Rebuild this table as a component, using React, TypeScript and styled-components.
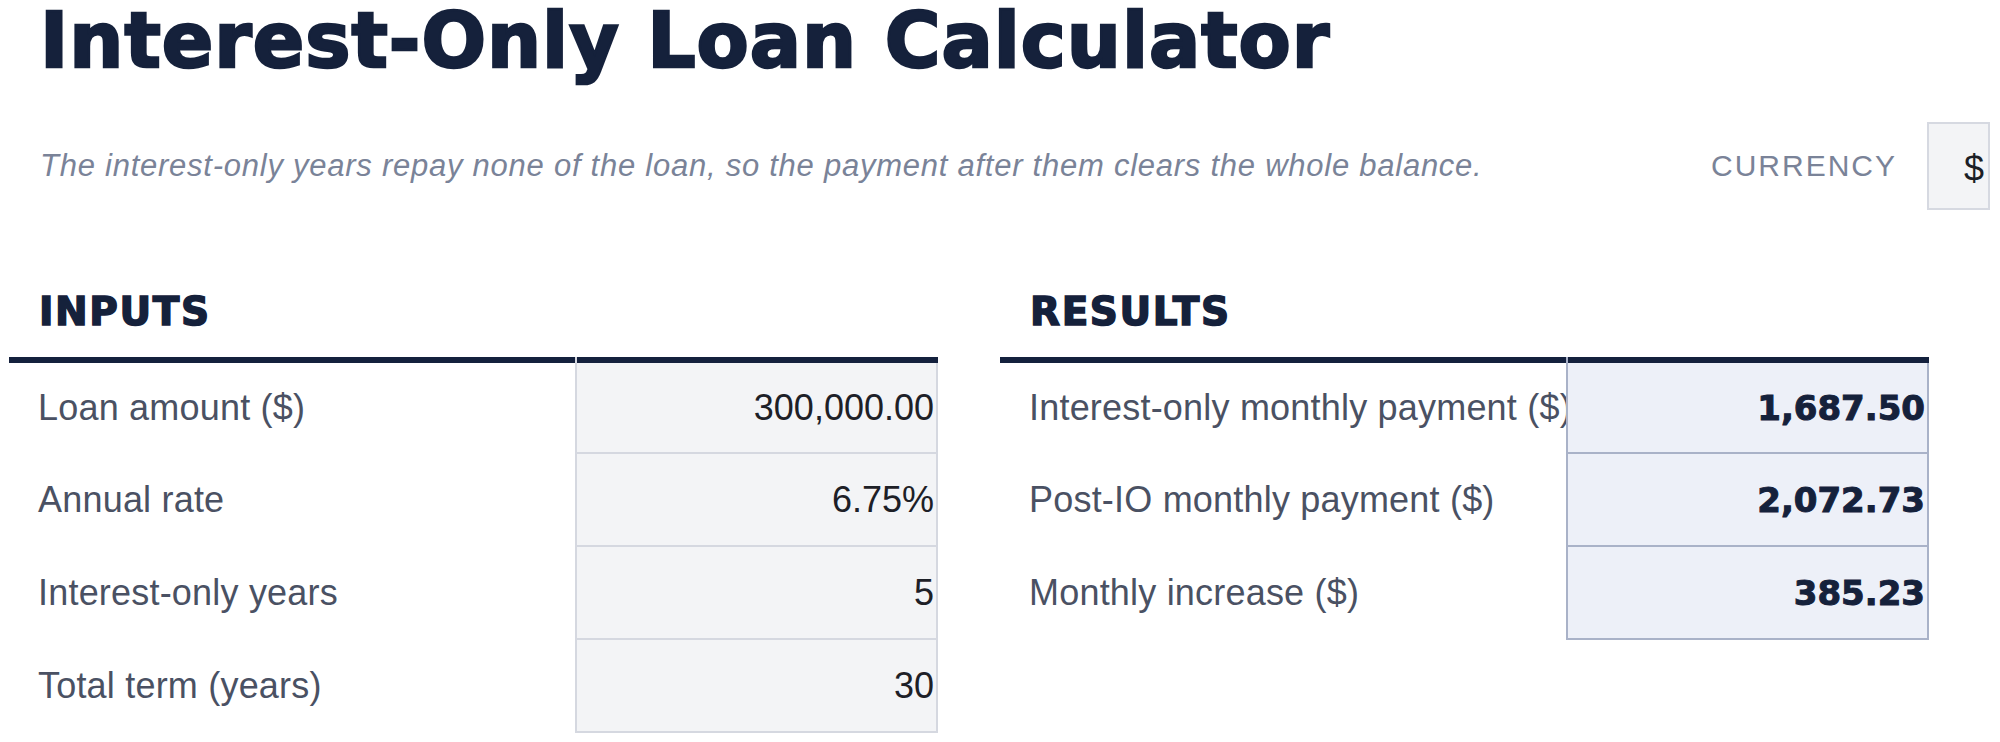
import React from 'react';
import styled, { createGlobalStyle } from 'styled-components';

const GlobalStyle = createGlobalStyle`
  html, body { margin: 0; padding: 0; background: #ffffff; }
  body { font-family: "Liberation Sans", Arial, sans-serif; }
  *, *::before, *::after { box-sizing: border-box; }
`;

const navy = '#15213b';

const Page = styled.div`
  width: 2000px;
  padding: 3px 10px 0 9px;
`;

const Title = styled.h1`
  margin: 0;
  padding-left: 31px;
  font-family: "DejaVu Sans", sans-serif;
  font-weight: 700;
  font-size: 76px;
  line-height: 76px;
  letter-spacing: 1px;
  -webkit-text-stroke: 2.5px ${navy};
  color: ${navy};
  white-space: nowrap;
`;

const SubRow = styled.div`
  display: flex;
  align-items: center;
  justify-content: space-between;
  margin-top: 43px;
  padding-left: 31px;
`;

const Subtitle = styled.p`
  margin: 0;
  font-style: italic;
  font-size: 31px;
  line-height: 34px;
  letter-spacing: 0.75px;
  color: #7a8398;
  white-space: nowrap;
`;

const CurrencyGroup = styled.div`
  display: flex;
  align-items: center;
  gap: 30px;
`;

const CurrencyLabel = styled.span`
  font-size: 30px;
  letter-spacing: 2px;
  text-transform: uppercase;
  color: #7a8398;
`;

const CurrencyBox = styled.div`
  width: 63px;
  height: 88px;
  border: 2px solid #d6d9e1;
  background: #f3f4f6;
  display: flex;
  align-items: center;
  justify-content: flex-end;
  padding: 6px 4px 0 0;
  font-size: 36px;
  color: #1c1f26;
`;

const Sections = styled.div`
  display: flex;
  gap: 62px;
  margin-top: 79px;
`;

const Section = styled.section`
  width: 929px;
  flex: none;
`;

const SectionTitle = styled.h2`
  margin: 0 0 22px;
  padding-left: 30px;
  font-family: "DejaVu Sans", sans-serif;
  font-weight: 700;
  font-size: 39px;
  line-height: 46px;
  letter-spacing: 1.6px;
  -webkit-text-stroke: 1.5px ${navy};
  color: ${navy};
`;

const Grid = styled.div`
  display: grid;
  grid-template-columns: 566px 363px;
  grid-template-rows: 91px;
  grid-auto-rows: 93px;
  border-top: 6px solid #14213d;
`;

const LabelCell = styled.div`
  display: flex;
  align-items: center;
  padding-left: 29px;
  border-bottom: 2px solid transparent;
  overflow: hidden;
  white-space: nowrap;
  font-size: 36px;
  letter-spacing: 0.2px;
  color: #4a5163;
`;

type Tone = 'input' | 'result';

const ValueCell = styled.div<{ $tone: Tone; $first: boolean }>`
  position: relative;
  display: flex;
  align-items: center;
  justify-content: flex-end;
  padding-right: 2px;
  white-space: nowrap;
  border: 2px solid ${(p) => (p.$tone === 'result' ? '#a9b2c8' : '#d5d8e0')};
  border-top: none;
  background: ${(p) => (p.$tone === 'result' ? '#edf0f8' : '#f3f4f6')};
  font-family: ${(p) => (p.$tone === 'result' ? '"DejaVu Sans", sans-serif' : '"Liberation Sans", Arial, sans-serif')};
  font-weight: ${(p) => (p.$tone === 'result' ? 700 : 400)};
  font-size: ${(p) => (p.$tone === 'result' ? '34px' : '36px')};
  -webkit-text-stroke: ${(p) => (p.$tone === 'result' ? `1px ${navy}` : '0')};
  color: ${(p) => (p.$tone === 'result' ? navy : '#1d2027')};

  &::before {
    content: '';
    display: ${(p) => (p.$first ? 'block' : 'none')};
    position: absolute;
    left: -2px;
    top: -6px;
    width: 2px;
    height: 6px;
    background: ${(p) => (p.$tone === 'result' ? '#a9b2c8' : '#d5d8e0')};
  }
`;

type Row = { label: string; value: string };

const inputs: Row[] = [
  { label: 'Loan amount ($)', value: '300,000.00' },
  { label: 'Annual rate', value: '6.75%' },
  { label: 'Interest-only years', value: '5' },
  { label: 'Total term (years)', value: '30' },
];

const results: Row[] = [
  { label: 'Interest-only monthly payment ($)', value: '1,687.50' },
  { label: 'Post-IO monthly payment ($)', value: '2,072.73' },
  { label: 'Monthly increase ($)', value: '385.23' },
];

function Table({ rows, tone }: { rows: Row[]; tone: Tone }) {
  return (
    <Grid>
      {rows.map((r, i) => (
        <React.Fragment key={r.label}>
          <LabelCell>{r.label}</LabelCell>
          <ValueCell $tone={tone} $first={i === 0}>
            {r.value}
          </ValueCell>
        </React.Fragment>
      ))}
    </Grid>
  );
}

export default function App() {
  return (
    <>
      <GlobalStyle />
      <Page>
        <Title>Interest-Only Loan Calculator</Title>
        <SubRow>
          <Subtitle>
            The interest-only years repay none of the loan, so the payment after them clears the whole balance.
          </Subtitle>
          <CurrencyGroup>
            <CurrencyLabel>Currency</CurrencyLabel>
            <CurrencyBox>$</CurrencyBox>
          </CurrencyGroup>
        </SubRow>
        <Sections>
          <Section>
            <SectionTitle>INPUTS</SectionTitle>
            <Table rows={inputs} tone="input" />
          </Section>
          <Section>
            <SectionTitle>RESULTS</SectionTitle>
            <Table rows={results} tone="result" />
          </Section>
        </Sections>
      </Page>
    </>
  );
}
